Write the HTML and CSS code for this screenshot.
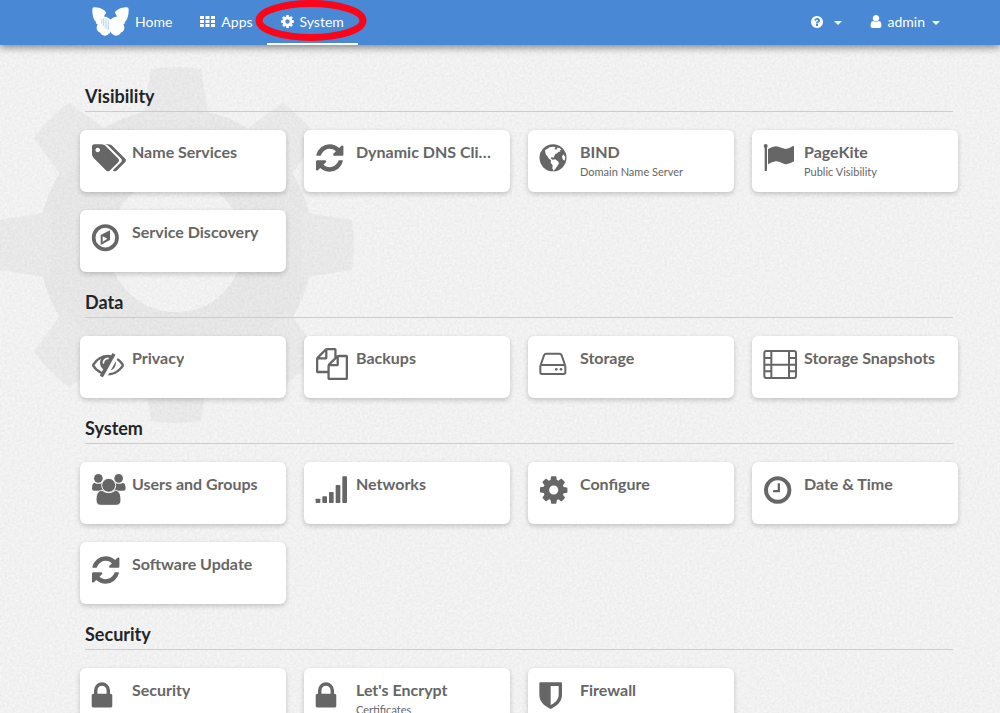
FILE: index.html
```html
<!DOCTYPE html>
<html lang="en">
<head>
<meta charset="utf-8">
<meta name="viewport" content="width=device-width, initial-scale=1">
<title>System</title>
<link rel="stylesheet" href="styles.css">
</head>
<body>
<svg class="defs" width="0" height="0" aria-hidden="true">
  <defs>
    <symbol id="cog" viewBox="0 0 1792 1792"><path d="M1152 896q0-106-75-181t-181-75-181 75-75 181 75 181 181 75 181-75 75-181zm512-109v222q0 12-8 23t-20 13l-185 28q-19 54-39 91 35 50 107 138 10 12 10 25t-9 23q-27 37-99 108t-94 71q-12 0-26-9l-138-108q-44 23-91 38-16 136-29 186-7 28-36 28h-222q-14 0-24.5-8.5t-11.5-21.5l-28-184q-49-16-90-37l-141 107q-10 9-25 9-14 0-25-11-126-114-165-168-7-10-7-23 0-12 8-23 15-21 51-66.5t54-70.5q-27-50-41-99l-183-27q-13-2-21-12.5t-8-23.5v-222q0-12 8-23t19-13l186-28q14-46 39-92-40-57-107-138-10-12-10-24 0-10 9-23 26-36 98.5-107.5t94.5-71.5q13 0 26 10l138 107q44-23 91-38 16-136 29-186 7-28 36-28h222q14 0 24.5 8.5t11.5 21.5l28 184q49 16 90 37l142-107q9-9 24-9 13 0 25 10 129 119 165 170 7 8 7 22 0 12-8 23-15 21-51 66.5t-54 70.5q26 50 41 98l183 28q13 2 21 12.5t8 23.5z"/></symbol>
    <symbol id="refresh" viewBox="73 -112 2016 2016"><path d="M1639 1056q0 5-1 7-64 268-268 434.5t-478 166.5q-146 0-282.5-55t-243.5-157l-129 129q-19 19-45 19t-45-19-19-45v-448q0-26 19-45t45-19h448q26 0 45 19t19 45-19 45l-137 137q71 66 161 102t187 36q134 0 250-65t186-179q11-17 53-117 8-23 30-23h192q13 0 22.5 9.5t9.5 22.5zm25-800v448q0 26-19 45t-45 19h-448q-26 0-45-19t-19-45 19-45l138-138q-148-137-349-137-134 0-250 65t-186 179q-11 17-53 117-8 23-30 23h-199q-13 0-22.5-9.5t-9.5-22.5v-7q65-268 270-434.5t480-166.5q146 0 284 55.5t245 156.5l130-129q19-19 45-19t45 19 19 45z"/></symbol>
    <symbol id="lock" viewBox="280 -112 2016 2016"><path d="M640 768h512v-192q0-106-75-181t-181-75-181 75-75 181v192zm832 96v576q0 40-28 68t-68 28h-960q-40 0-68-28t-28-68v-576q0-40 28-68t68-28h32v-192q0-184 132-316t316-132 316 132 132 316v192h32q40 0 68 28t28 68z"/></symbol>
    <symbol id="butterfly" viewBox="0 0 110 86">
      <path d="M1 7Q0 0 9 1C25 2 38 8 42 17L35 28Q43 27 50 33L55 37L60 33Q66 29 75 28L68 17C73 8 85 2 101 1Q110 0 109 7C109 23 106 38 97 45C100 47 96 50 93 51Q99 60 94 70Q91 75 86 76Q82 86 70 85Q58 82 55 73Q52 82 40 85Q28 86 24 76Q19 75 16 70Q11 60 17 51Q8 48 13 45C4 38 1 23 1 7Z"/>
      <path class="veins" d="M29 35V51M34 33V57M39 34V63M44 37V67M49 41V68"/>
    </symbol>
  </defs>
</svg>

<header class="navbar">
  <nav class="nav" aria-label="Main">
    <a class="nav-link home" href="#"><svg class="logo" aria-hidden="true"><use href="#butterfly"/></svg>Home</a>
    <a class="nav-link" href="#"><svg class="th" viewBox="0 0 15 11" aria-hidden="true"><path d="M0 0h4v3H0zM5.500 0h4v3h-4zM11 0h4v3h-4zM0 4h4v3H0zM5.500 4h4v3h-4zM11 4h4v3h-4zM0 8h4v3H0zM5.500 8h4v3h-4zM11 8h4v3h-4z"/></svg>Apps</a>
    <a class="nav-link active" href="#" aria-current="page"><svg class="nav-icon" viewBox="128 128 1536 1536" aria-hidden="true"><use href="#cog" width="1792" height="1792"/></svg>System
      <svg class="marker" viewBox="0 0 112 42" aria-hidden="true"><ellipse cx="56" cy="20.500" rx="52" ry="17"/></svg></a>
  </nav>
  <div class="nav">
    <button class="nav-link" type="button" aria-label="Help"><svg class="help-icon" viewBox="128 128 1536 1536" aria-hidden="true"><path d="M1024 1376v-192q0-14-9-23t-23-9h-192q-14 0-23 9t-9 23v192q0 14 9 23t23 9h192q14 0 23-9t9-23zm256-672q0-88-55.500-163t-138.500-116-170-41q-243 0-371 213-15 24 8 42l132 100q7 6 19 6 16 0 25-12 53-68 86-92 34-24 86-24 48 0 85.500 26t37.500 59q0 38-20 61t-68 45q-63 28-115.500 86.500t-52.500 125.500v36q0 14 9 23t23 9h192q14 0 23-9t9-23q0-19 21.500-49.500t54.500-49.500q32-18 49-28.500t46-35 44.500-48 28-60.500 12.500-81zm384 192q0 209-103 385.500t-279.500 279.500-385.500 103-385.500-103-279.500-279.500-103-385.500 103-385.500 279.500-279.500 385.500-103 385.500 103 279.500 279.500 103 385.500z"/></svg><span class="caret"></span></button>
    <button class="nav-link" type="button"><svg class="user-icon" viewBox="256 128 1280 1536" aria-hidden="true"><path d="M1536 1399q0 109-62.500 187t-150.500 78h-854q-88 0-150.500-78t-62.500-187q0-85 8.500-160.500t31.500-152 58.500-131 94-89 134.500-34.500q131 128 313 128t313-128q76 0 134.500 34.500t94 89 58.500 131 31.500 152 8.500 160.500zm-256-887q0 159-112.500 271.500t-271.500 112.500-271.500-112.500-112.500-271.500 112.500-271.500 271.500-112.500 271.500 112.500 112.500 271.500z"/></svg>admin<span class="caret"></span></button>
  </div>
</header>

<div class="page">
  <svg class="texture" aria-hidden="true">
    <filter id="paper" x="0" y="0" width="100%" height="100%" color-interpolation-filters="sRGB"><feTurbulence type="fractalNoise" baseFrequency="0.4" numOctaves="3" seed="4"/><feColorMatrix values="0.07 0 0 0 0.910  0.07 0 0 0 0.910  0.07 0 0 0 0.910  0 0 0 0 1"/></filter>
    <rect width="100%" height="100%" filter="url(#paper)"/>
  </svg>
  <svg class="watermark" viewBox="-180 -180 360 360" aria-hidden="true">
    <defs><path id="tooth" d="M-33-125L-25-176Q0-180 25-176L33-125Z"/></defs>
    <g>
      <circle r="102" fill="none" stroke="#000" stroke-width="70"/>
      <use href="#tooth"/><use href="#tooth" transform="rotate(45)"/><use href="#tooth" transform="rotate(90)"/><use href="#tooth" transform="rotate(135)"/><use href="#tooth" transform="rotate(180)"/><use href="#tooth" transform="rotate(225)"/><use href="#tooth" transform="rotate(270)"/><use href="#tooth" transform="rotate(315)"/>
    </g>
  </svg>

  <main class="content">
    <section>
      <h2>Visibility</h2>
      <div class="cards">
        <a class="card" href="#"><svg class="icon" viewBox="-56 -112 2016 2016" aria-hidden="true"><path d="M448 448q0-53-37.500-90.500t-90.500-37.500-90.500 37.500-37.500 90.500 37.500 90.500 90.500 37.500 90.500-37.500 37.500-90.500zm1067 576q0 53-37 90l-491 492q-39 37-91 37-53 0-90-37l-715-716q-38-37-64.500-101t-26.500-117v-416q0-52 38-90t90-38h416q53 0 117 26.500t102 64.500l715 714q37 39 37 91zm384 0q0 53-37 90l-491 492q-39 37-91 37-36 0-59-14t-53-45l470-470q37-37 37-90 0-52-37-91l-715-714q-38-38-102-64.500t-117-26.500h224q53 0 117 26.500t102 64.500l715 714q37 39 37 91z"/></svg><span class="label"><span class="name">Name Services</span></span></a>
        <a class="card" href="#"><svg class="icon" aria-hidden="true"><use href="#refresh"/></svg><span class="label"><span class="name">Dynamic DNS Client</span></span></a>
        <a class="card" href="#"><svg class="icon" viewBox="0 0 108 108" aria-hidden="true"><circle cx="42" cy="53.500" r="40.500"/><path class="cut" d="M18 30L25 26L32 22L42 20L50 22L46 27L52 29L55 23L62 24L68 31L62 30L64 35L58 35L55 40L49 42L46 48L44 53L38 51L35 55L41 59L49 58L58 65L60 70L55 78L48 88L43 92L40 84L41 76L35 68L36 60L30 56L25 49L20 43L19 36ZM73 43L69 50L71 58L77 62L79 51Z"/></svg><span class="label"><span class="name">BIND</span><span class="desc">Domain Name Server</span></span></a>
        <a class="card" href="#"><svg class="icon" viewBox="0 0 108 108" aria-hidden="true"><circle cx="8" cy="18" r="6"/><rect x="5" y="18" width="7" height="75" rx="2"/><path d="M15 27Q34 16 46 20T68 27Q79 25 90 18Q93 17 93 20V64Q76 75 64 72Q48 63 38 64Q28 65 15 73Z"/></svg><span class="label"><span class="name">PageKite</span><span class="desc">Public Visibility</span></span></a>
        <a class="card" href="#"><svg class="icon" viewBox="0 0 108 108" aria-hidden="true"><circle class="line heavy" cx="43" cy="53" r="35"/><path fill-rule="evenodd" d="M29 45L57 31V60L29 75ZM35 49V65L49 56Z"/></svg><span class="label"><span class="name">Service Discovery</span></span></a>
      </div>
    </section>

    <section>
      <h2>Data</h2>
      <div class="cards">
        <a class="card" href="#"><svg class="icon" viewBox="-56 -112 2016 2016" aria-hidden="true"><path d="M555 1335l78-141q-87-63-136-159t-49-203q0-121 61-225-229 117-381 353 167 258 427 375zm389-759q0-20-14-34t-34-14q-125 0-214.500 89.500t-89.500 214.500q0 20 14 34t34 14 34-14 14-34q0-86 61-147t147-61q20 0 34-14t14-34zm363-191q0 7-1 9-106 189-316 567t-315 566l-49 89q-10 16-28 16-12 0-134-70-16-10-16-28 0-12 44-87-143-65-263.500-173t-208.500-245q-20-31-20-69t20-69q153-235 380-371t496-136q89 0 180 17l54-97q10-16 28-16 5 0 18 6t31 15.500 33 18.500 31.500 18.500 19.500 11.500q16 10 16 27zm37 447q0 139-79 253.500t-209 164.500l280-502q8 45 8 84zm448 128q0 35-20 69-39 64-109 145-150 172-347.500 267t-419.500 95l74-132q212-18 392.500-137t301.500-307q-115-179-282-294l63-112q95 64 182.500 153t144.500 184q20 34 20 69z"/></svg><span class="label"><span class="name">Privacy</span></span></a>
        <a class="card" href="#"><svg class="icon" viewBox="-56 -112 2016 2016" aria-hidden="true"><path d="M1696 384q40 0 68 28t28 68v1216q0 40-28 68t-68 28h-960q-40 0-68-28t-28-68v-288h-544q-40 0-68-28t-28-68v-672q0-40 20-88t48-76l408-408q28-28 76-48t88-20h416q40 0 68 28t28 68v328q68-40 128-40h416zm-544 213l-299 299h299v-299zm-640-384l-299 299h299v-299zm196 647l316-316v-416h-384v416q0 40-28 68t-68 28h-416v640h512v-256q0-40 20-88t48-76zm956 804v-1152h-384v416q0 40-28 68t-68 28h-416v640h896z"/></svg><span class="label"><span class="name">Backups</span></span></a>
        <a class="card" href="#"><svg class="icon" viewBox="0 0 108 108" aria-hidden="true"><path class="line" d="M4 61Q4 57 8 57H75Q79 57 79 61V79Q79 84 74 84H9Q4 84 4 79ZM5 57L15 28Q17 23 22 23H61Q66 23 68 28L78 57"/><circle cx="52" cy="70" r="4"/><circle cx="66" cy="70" r="4"/></svg><span class="label"><span class="name">Storage</span></span></a>
        <a class="card" href="#"><svg class="icon" viewBox="0 0 108 108" aria-hidden="true"><rect class="line" x="4" y="15" width="95" height="81" rx="6"/><path class="line" d="M25 15V96M78 15V96M25 56H78M4 36H25M4 56H25M4 76H25M78 36H99M78 56H99M78 76H99"/></svg><span class="label"><span class="name">Storage Snapshots</span></span></a>
      </div>
    </section>

    <section>
      <h2>System</h2>
      <div class="cards">
        <a class="card" href="#"><svg class="icon" viewBox="0 0 108 108" aria-hidden="true"><circle cx="22" cy="19" r="13"/><circle cx="83" cy="19" r="13"/><path d="M3 50Q3 34 10 32Q22 39 34 32L38 56H13Q3 58 3 50ZM104 50Q104 34 96 32Q84 39 72 32L68 56H93Q104 58 104 50Z"/><path class="outlined" d="M33 55Q53 69 73 55C85 55 90 68 90 84Q90 100 75 100H30Q15 100 15 84C15 68 20 55 33 55Z"/><circle class="outlined" cx="53" cy="40" r="21"/></svg><span class="label"><span class="name">Users and Groups</span></span></a>
        <a class="card" href="#"><svg class="icon" viewBox="0 0 108 108" aria-hidden="true"><rect x="2" y="80" width="14" height="13" rx="2"/><rect x="22" y="73" width="14" height="20" rx="2"/><rect x="42" y="60" width="14" height="33" rx="2"/><rect x="62" y="39" width="14" height="54" rx="2"/><rect x="82" y="13" width="14" height="80" rx="2"/></svg><span class="label"><span class="name">Networks</span></span></a>
        <a class="card" href="#"><svg class="icon" viewBox="73 -112 2016 2016" aria-hidden="true"><use href="#cog" width="1792" height="1792"/></svg><span class="label"><span class="name">Configure</span></span></a>
        <a class="card" href="#"><svg class="icon" viewBox="73 -112 2016 2016" aria-hidden="true"><path d="M1024 544v448q0 14-9 23t-23 9h-320q-14 0-23-9t-9-23v-64q0-14 9-23t23-9h224v-352q0-14 9-23t23-9h64q14 0 23 9t9 23zm416 352q0-148-73-273t-198-198-273-73-273 73-198 198-73 273 73 273 198 198 273 73 273-73 198-198 73-273zm224 0q0 209-103 385.500t-279.500 279.500-385.500 103-385.500-103-279.500-279.500-103-385.500 103-385.500 279.500-279.500 385.500-103 385.500 103 279.500 279.500 103 385.500z"/></svg><span class="label"><span class="name">Date &amp; Time</span></span></a>
        <a class="card" href="#"><svg class="icon" aria-hidden="true"><use href="#refresh"/></svg><span class="label"><span class="name">Software Update</span></span></a>
      </div>
    </section>

    <section>
      <h2>Security</h2>
      <div class="cards">
        <a class="card" href="#"><svg class="icon" aria-hidden="true"><use href="#lock"/></svg><span class="label"><span class="name">Security</span></span></a>
        <a class="card" href="#"><svg class="icon" aria-hidden="true"><use href="#lock"/></svg><span class="label"><span class="name">Let's Encrypt</span><span class="desc">Certificates</span></span></a>
        <a class="card" href="#"><svg class="icon" viewBox="0 0 108 108" aria-hidden="true"><path fill-rule="evenodd" d="M4 13H66Q69 13 69 16V50C69 74 50 85 35 93C20 85 1 74 1 50V16Q1 13 4 13ZM35 24V81C46 75 59 66 59 50V24Z"/></svg><span class="label"><span class="name">Firewall</span></span></a>
      </div>
    </section>
  </main>
</div>
</body>
</html>
```
FILE: styles.css
```css
* {
  box-sizing: border-box;
}

body {
  margin: 0;
  background: #efefef;
  color: #212529;
  font-family: Lato, "Liberation Sans", sans-serif;
}

svg {
  flex: none;
  fill: currentColor;
}

.defs {
  position: absolute;
}

/* Top bar */
.navbar {
  position: relative;
  z-index: 2;
  display: flex;
  justify-content: space-between;
  height: 45px;
  padding: 0 46px 0 78px;
  background: #4888d4;
  box-shadow: 0 2px 8px rgba(0, 0, 0, 0.5);
}

.nav {
  display: flex;
}

.nav-link {
  position: relative;
  display: flex;
  align-items: center;
  gap: 6px;
  padding: 0 14px 2px;
  border: 0;
  background: none;
  color: #fff;
  font: 14px/20px Lato, "Liberation Sans", sans-serif;
  text-decoration: none;
  cursor: pointer;
}

.active {
  box-shadow: inset 0 -2px #fff;
}

.logo {
  width: 37px;
  height: 29px;
}

.veins {
  fill: none;
  stroke: #4888d4;
  stroke-width: 1;
}

.th {
  width: 15px;
  height: 11px;
}

.nav-icon {
  width: 13px;
  height: 13px;
}

.help-icon {
  width: 12px;
  height: 12px;
}

.user-icon {
  width: 12px;
  height: 13px;
}

.caret {
  margin: 2px 0 0 1px;
  border: 4px solid transparent;
  border-top-color: #fff;
  border-bottom: 0;
}

.help-icon + .caret {
  margin-left: 5px;
}

.marker {
  position: absolute;
  top: 0;
  left: -12px;
  width: 112px;
  height: 42px;
  fill: none;
  stroke: #fc0519;
  stroke-width: 7;
  pointer-events: none;
}

/* Page backdrop */
.page {
  position: relative;
  overflow: hidden;
}

.texture {
  position: absolute;
  inset: 0;
  width: 100%;
  height: 100%;
}

.watermark {
  position: absolute;
  top: 20px;
  left: -4px;
  width: 360px;
  opacity: 0.04;
}

/* Sections */
.content {
  position: relative;
  padding: 36px 42px 18px 80px;
}

h2 {
  margin: 0 5px 18px;
  padding: 3px 0;
  border-bottom: 1px solid #ccc;
  font-size: 18px;
  line-height: 24px;
}

section + section {
  margin-top: 15px;
}

.cards {
  display: grid;
  grid-template-columns: repeat(4, minmax(0, 1fr));
  gap: 18px;
}

.card {
  display: flex;
  gap: 5px;
  min-height: 62px;
  padding: 10px 14px 10px 11px;
  border-radius: 6px;
  background: #fff;
  box-shadow: 0 2px 5px rgba(0, 0, 0, 0.2);
  color: #666;
  text-decoration: none;
}

.icon {
  width: 36px;
  height: 36px;
}

.line {
  fill: none;
  stroke: currentColor;
  stroke-width: 6;
}

.heavy {
  stroke-width: 11;
}

.cut {
  fill: #fff;
}

.outlined {
  stroke: #fff;
  stroke-width: 3;
}

.label {
  display: flex;
  flex-direction: column;
  min-width: 0;
  padding-top: 2px;
  line-height: 20px;
}

.name {
  overflow: hidden;
  font-size: 16px;
  font-weight: 700;
  text-overflow: ellipsis;
  white-space: nowrap;
}

.desc {
  font-size: 11px;
}
```
